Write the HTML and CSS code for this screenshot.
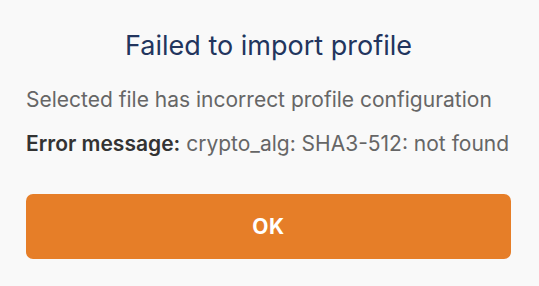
FILE: index.html
```html
<!DOCTYPE html>
<html lang="en">

<head>
  <meta charset="UTF-8">
  <title>Failed to import profile</title>
  <link rel="stylesheet" href="styles.css">
</head>

<body>
  <div class="dialog">
    <h1 class="title">Failed to import profile</h1>
    <p class="text">Selected file has incorrect profile configuration</p>
    <p class="text"><strong>Error message:</strong> crypto_alg: SHA3-512: not found</p>
    <button class="ok">OK</button>
  </div>
</body>

</html>
```
FILE: styles.css
```css
html {
  background: #f9f9f9;
}

body {
  margin: 0;
  font-family: Inter, sans-serif;
}

.dialog {
  padding: 30px 28px 26px 26px;
  display: flex;
  flex-direction: column;
}

.title {
  margin: 0 0 24px;
  text-align: center;
  font-size: 27px;
  font-weight: 400;
  line-height: 32px;
  color: #22355e;
}

.text {
  margin: 0 0 16px;
  font-size: 21px;
  line-height: 28px;
  color: #666666;
}

.text strong {
  font-weight: 600;
  color: #333333;
}

.ok {
  margin-top: 20px;
  height: 65px;
  border: 0;
  border-radius: 7px;
  background: #e67e28;
  color: white;
  font-family: Inter, sans-serif;
  font-size: 21px;
  font-weight: 700;
  letter-spacing: 0.5px;
}
```
